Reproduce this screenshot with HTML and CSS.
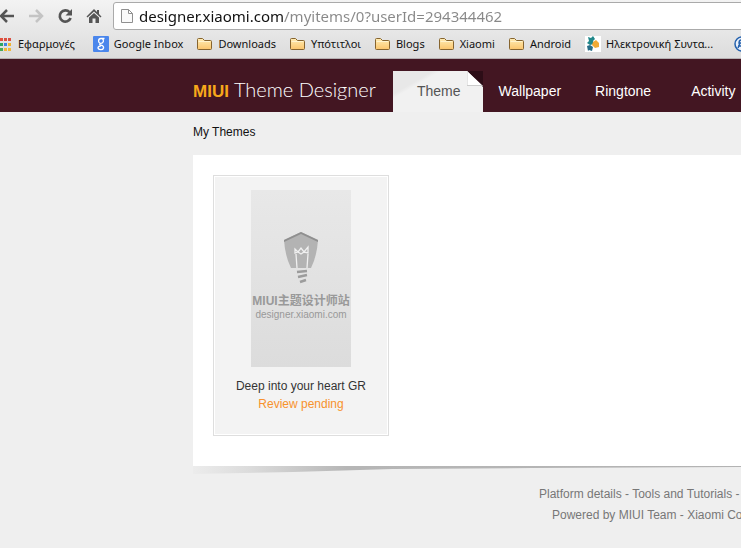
FILE: index.html
```
<!DOCTYPE html>
<html lang="en">
<head>
	<meta charset="UTF-8">
	<title>MIUI Theme Designer</title>
	<link rel="stylesheet" href="styles.css">
</head>
<body>

	<!-- folder icon shared by the bookmarks -->
	<svg width="0" height="0" class="defs">
		<defs>
			<linearGradient id="folder-fill" x1="0" y1="0" x2="0" y2="1">
				<stop offset="0" stop-color="#ffedb5"/>
				<stop offset="1" stop-color="#fbc56c"/>
			</linearGradient>
			<symbol id="folder" viewBox="0 0 16 16">
				<path d="M.5 12.500V3.500Q.5 2.500 1.500 2.500H5.500L7.500 4.500H13.500Q14.500 4.500 14.500 5.500V12.500Q14.500 13.500 13.500 13.500H1.500Q.5 13.500 .5 12.500Z" fill="url(#folder-fill)" stroke="#86642f"/>
				<path d="M1.500 5.500H13" stroke="#fff4cf" fill="none"/>
			</symbol>
		</defs>
	</svg>

	<div class="browser">
		<div class="toolbar">
			<button class="tool" type="button" aria-label="Back"><svg width="16" height="16" viewBox="0 0 16 16"><path d="M15 8H2M8 2L2 8L8 14" fill="none" stroke="#555" stroke-width="2.500"/></svg></button>
			<button class="tool" type="button" aria-label="Forward"><svg width="16" height="16" viewBox="0 0 16 16"><path d="M1 8H14M8 2L14 8L8 14" fill="none" stroke="#c4c4c4" stroke-width="2.500"/></svg></button>
			<button class="tool" type="button" aria-label="Reload"><svg width="16" height="16" viewBox="0 0 16 16"><path d="M12.500 4.200A5.600 5.600 0 1 0 13.600 10" fill="none" stroke="#555" stroke-width="2.700"/><path d="M15 1V7.500H8.500Z" fill="#555"/></svg></button>
			<button class="tool" type="button" aria-label="Home"><svg width="16" height="16" viewBox="0 0 16 16"><path d="M8 1L11 4V2H13V6L15.500 8.500L14.500 9.500L8 3.500L1.500 9.500L.5 8.500Z" fill="#555"/><path d="M3 9.500L8 5L13 9.500V15H9.500V10.500H6.500V15H3Z" fill="#555"/></svg></button>
			<div class="address">
				<svg width="12" height="16" viewBox="0 0 12 16"><path d="M.5 1.500H7.500L11.500 5.500V14.500H.5ZM7.500 1.500V5.500H11.500" fill="#fafafa" stroke="#8f8f8f"/></svg>
				<input class="url" type="text" aria-label="Address" value="designer.xiaomi.com/myitems/0?userId=294344462">
			</div>
		</div>
		<nav class="bookmarks">
			<a class="apps" href="#"><svg width="12" height="14" viewBox="0 0 12 14"><path d="M0 1h3v3H0z" fill="#e2503c"/><path d="M4 1h3v3H4zM8 1h3v3H8z" fill="#d94f41"/><path d="M0 6h3v3H0z" fill="#2ea560"/><path d="M4 6h3v3H4z" fill="#3f83e0"/><path d="M8 6h3v3H8z" fill="#efb32e"/><path d="M0 11h3v3H0z" fill="#4aa85a"/><path d="M4 11h3v3H4zM8 11h3v3H8z" fill="#f0b83a"/></svg>Εφαρμογές</a>
			<a href="#"><svg width="16" height="16" viewBox="0 0 16 16"><rect width="16" height="16" rx="1" fill="#4a86ec"/><path d="M11.500 2.500H8A2.400 2.400 0 1 0 8 7.300A2.400 2.400 0 0 0 9 2.700M7 7.500Q6 8.700 8 9.200Q11 10 10.500 12Q10 13.800 7.700 13.700Q5 13.500 5 11.800Q5.200 10 8 9.800" fill="none" stroke="#fff" stroke-width="1.300"/></svg>Google Inbox</a>
			<a href="#"><svg width="16" height="16"><use href="#folder"/></svg>Downloads</a>
			<a href="#"><svg width="16" height="16"><use href="#folder"/></svg>Υπότιτλοι</a>
			<a href="#"><svg width="16" height="16"><use href="#folder"/></svg>Blogs</a>
			<a href="#"><svg width="16" height="16"><use href="#folder"/></svg>Xiaomi</a>
			<a href="#"><svg width="16" height="16"><use href="#folder"/></svg>Android</a>
			<a href="#"><svg width="16" height="16" viewBox="0 0 16 16"><path fill="#fff" d="M0 0h16v16H0z"/><path d="M3 1L6 2L8 0L10 3L8 5L9 8L5 9L2 7L4 5Z" fill="#20878a"/><path d="M8 6L11 4L14 7V11L10 12L7 9Z" fill="#f0aa35"/><path d="M2 10L5 9L8 11L7 15L4 14L3 15Z" fill="#276d87"/></svg>Ηλεκτρονική Συντα...</a>
			<a href="#" aria-label="Bookmark"><svg width="16" height="16" viewBox="0 0 16 16"><circle cx="8" cy="8" r="7" fill="#e9f0fa" stroke="#2461ad" stroke-width="1.500"/><path d="M10 4Q5 3 5 7H9M4 10H11M6 7L4 12" fill="none" stroke="#2461ad" stroke-width="1.500"/></svg></a>
		</nav>
	</div>

	<header class="header">
		<a class="logo" href="#"><b>MIUI</b><span>Theme Designer</span></a>
		<nav class="menu">
			<a class="active" href="#">Theme
				<svg class="fold" width="16" height="16" viewBox="0 0 16 16"><path d="M0 0H16V16Z" fill="#2d0d17"/><path d="M0 0L16 15H0Z" fill="#fff"/><path d="M0 1V14.500H15" fill="none" stroke="#ccc"/></svg>
			</a>
			<a href="#">Wallpaper</a>
			<a href="#">Ringtone</a>
			<a href="#">Activity</a>
		</nav>
	</header>

	<main class="main">
		<h1>My Themes</h1>
		<div class="panel">
			<a class="card" href="#">
				<span class="thumb">
					<svg width="36" height="52" viewBox="0 0 36 52">
						<path d="M18 0L35 8Q34 24 28 36H8Q2 24 1 8Z" fill="#b3b3b3"/>
						<path d="M1 10V8L18 0L35 8V10L18 2Z" fill="#8f8f8f"/>
						<path d="M14 36L13 22M24 36L25 22M12 21V17L15 20L18 16L21 20L25 15V21L21 20L18 22L15 20Z" fill="none" stroke="#f0f0f0" stroke-width="1.300"/>
						<path d="M14 40L24 39M15 45L24 43M17 50L23 48" stroke="#9c9c9c" stroke-width="2.500"/>
					</svg>
					<b>MIUI主题设计师站</b>
					<small>designer.xiaomi.com</small>
				</span>
				<span class="name">Deep into your heart GR</span>
				<span class="status">Review pending</span>
			</a>
		</div>
		<svg class="shadow" height="8" viewBox="0 0 548 8" preserveAspectRatio="none">
			<defs>
				<linearGradient id="edge">
					<stop offset="0" stop-color="#ececec"/>
					<stop offset=".1" stop-color="#dcdcdc"/>
					<stop offset=".28" stop-color="#b6b6b6"/>
					<stop offset="1" stop-color="#b3b3b3"/>
				</linearGradient>
			</defs>
			<path d="M0 0H548V1L340 2L200 3L100 6L0 8Z" fill="url(#edge)"/>
		</svg>
	</main>

	<footer class="footer">
		<p><a href="#">Platform details</a> - <a href="#">Tools and Tutorials</a> -</p>
		<p class="powered">Powered by MIUI Team - Xiaomi Co</p>
	</footer>

</body>
</html>
```
FILE: styles.css
```
* {
	margin: 0;
	padding: 0;
	box-sizing: border-box;
}
body {
	background: #efefef;
	font: 12px/18px "Liberation Sans", "Noto Sans CJK SC", sans-serif;
	color: #333;
	overflow-x: hidden;
}
a {
	color: inherit;
	text-decoration: none;
}
svg {
	display: block;
	flex-shrink: 0;
}
.defs {
	position: absolute;
}

/* browser bars */
.browser {
	background: linear-gradient(#f3f3f3, #dcdcdc);
	border-bottom: 1px solid #b5b0b2;
	font-family: "Noto Sans", sans-serif;
}
.toolbar {
	display: flex;
	align-items: center;
	height: 32px;
}
.tool {
	display: flex;
	justify-content: center;
	width: 29px;
	border: 0;
	background: none;
}
.tool:first-child {
	margin-left: -8px;
}
.address {
	display: flex;
	flex: 1;
	align-items: center;
	gap: 6px;
	height: 28px;
	margin: 0 -4px 0 5px;
	padding-left: 7px;
	border: 1px solid #aaa;
	border-radius: 3px;
	background: #fff;
}
.url {
	flex: 1;
	min-width: 0;
	border: 0;
	outline: 0;
	font: 15px/24px "Noto Sans", sans-serif;
	color: transparent;
	background: linear-gradient(90deg, #111 145px, #888 145px);
	-webkit-background-clip: text;
	background-clip: text;
}
.bookmarks {
	display: flex;
	align-items: center;
	gap: 14px;
	height: 26px;
	padding-bottom: 2px;
	font-size: 11px;
	color: #111;
	white-space: nowrap;
}
.bookmarks a {
	display: flex;
	align-items: center;
	gap: 5px;
}
.bookmarks .apps {
	gap: 6px;
	margin-right: 4px;
}
.bookmarks a:last-child {
	margin-left: 7px;
}

/* site header */
.header {
	display: flex;
	height: 53px;
	padding-left: 193px;
	background: #431622;
	color: #fff;
}
.logo {
	display: flex;
	flex-shrink: 0;
	align-items: baseline;
	gap: 5px;
	width: 200px;
	padding-top: 18px;
	white-space: nowrap;
}
.logo b {
	font: bold 17px/24px "Liberation Sans", sans-serif;
	color: #f7a81b;
}
.logo span {
	font: 300 20px/24px Lato, sans-serif;
	color: #fff;
}
.menu {
	display: flex;
	align-items: flex-end;
	font-size: 14px;
	line-height: 41px;
	white-space: nowrap;
}
.menu a {
	padding: 0 16px;
}
.menu a:nth-child(3) {
	padding: 0 24px 0 18px;
}
.menu .active {
	position: relative;
	padding: 0 22px 0 24px;
	background: linear-gradient(150deg, #e8e8e8 0, #e8e8e8 20px, #f1f1f1 24px);
	color: #555;
}
.fold {
	position: absolute;
	top: 0;
	right: 0;
}

/* themes list */
.main {
	padding-left: 193px;
}
.main h1 {
	padding: 11px 0 14px;
	font-size: 12px;
	font-weight: normal;
	line-height: 18px;
	color: #111;
}
.panel {
	padding: 20px 20px 30px;
	background: #fff;
}
.card {
	display: flex;
	flex-direction: column;
	align-items: center;
	width: 176px;
	padding: 14px 0 22px;
	border: 1px solid #dedede;
	background: #f3f3f3;
	box-shadow: inset 0 0 0 1px #fff;
}
.thumb {
	display: flex;
	flex-direction: column;
	align-items: center;
	width: 100px;
	height: 177px;
	margin-bottom: 10px;
	padding-top: 42px;
	background: linear-gradient(#e8e8e8, #dcdcdc);
	color: #999;
	white-space: nowrap;
}
.thumb b {
	margin-top: 9px;
	font: bold 12px/16px "Liberation Sans", "Noto Sans CJK SC", sans-serif;
}
.thumb small {
	font-size: 10px;
	line-height: 12px;
}
.status {
	color: #f7922d;
}
.shadow {
	width: 100%;
}

.footer {
	padding: 10px 0 24px 539px;
	line-height: 21px;
	color: #777;
	white-space: nowrap;
}
.powered {
	padding-left: 13px;
}
```
